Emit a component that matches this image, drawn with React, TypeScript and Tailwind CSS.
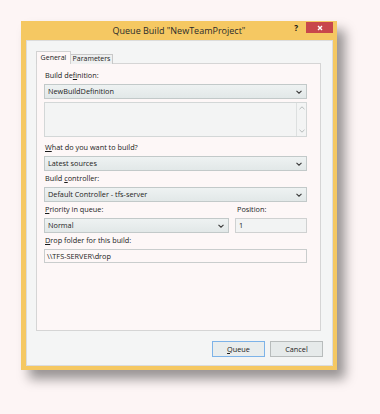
import React from 'react';

const font = { fontFamily: '"Segoe UI", "Open Sans", "Noto Sans", sans-serif' };

const Chevron: React.FC = () => (
  <svg width="6" height="4" viewBox="0 0 6 4" className="shrink-0">
    <path d="M0.5 0.8 L3 3.2 L5.5 0.8" fill="none" stroke="#3a3a3a" strokeWidth="1.1" />
  </svg>
);

const Label: React.FC<{ children: React.ReactNode; className?: string }> = ({ children, className = '' }) => (
  <div className={`h-[14px] leading-[14px] text-[7.3px] font-medium text-[#1a1a1a] pl-[1px] ${className}`}>{children}</div>
);

const Select: React.FC<{ value: string; className?: string }> = ({ value, className = '' }) => (
  <div
    className={`h-[15px] flex items-center justify-between pl-[3px] pr-[4px] border border-[#c2c9c9] bg-gradient-to-b from-[#eef2f2] to-[#e2e8e8] text-[7.3px] font-medium text-[#1a1a1a] ${className}`}
  >
    <span>{value}</span>
    <Chevron />
  </div>
);

const U: React.FC<{ children: React.ReactNode }> = ({ children }) => (
  <span className="underline decoration-[0.7px] underline-offset-[1px]">{children}</span>
);

export default function App() {
  return (
    <div className="w-[380px] h-[414px] bg-[#fdf5f5] pt-[21px] pl-[21px]" style={font}>
      <div className="w-[316px] h-[349px] bg-[#f5c862] flex flex-col shadow-[8px_9px_11px_rgba(0,0,0,0.4)]">
        {/* title bar */}
        <div className="relative h-[19px] flex items-center justify-center shrink-0">
          <span className="text-[9px] text-[#2b2b2b]">Queue Build "NewTeamProject"</span>
          <span className="absolute right-[39px] top-[1px] text-[8px] font-bold text-[#111]">?</span>
          <div className="absolute right-[4px] top-[1px] w-[27px] h-[11px] bg-[#c8474b] flex items-center justify-center">
            <svg width="6" height="6" viewBox="0 0 6 6">
              <path d="M1 1 L5 5 M5 1 L1 5" stroke="#fff" strokeWidth="1.4" />
            </svg>
          </div>
        </div>

        {/* body */}
        <div className="flex-1 ml-[5px] mr-[4px] mb-[4px] bg-[#f4f5f5] border border-[#dcdcdc] pt-[10px] pl-[9px] pr-[11px] flex flex-col">
          {/* tabs */}
          <div className="h-[13px] flex items-end relative z-10 -mb-[1px]">
            <div className="h-[13px] w-[35px] border border-b-0 border-[#d2d2d2] bg-[#fdf7f7] text-[7px] font-medium text-[#1a1a1a] flex items-center justify-center">
              General
            </div>
            <div className="h-[10px] w-[42px] border border-l-0 border-b-0 border-[#c8c8c8] bg-[#eff0f0] text-[7px] font-medium text-[#1a1a1a] flex items-center justify-center">
              Parameters
            </div>
          </div>

          {/* panel */}
          <div className="h-[268px] border border-[#d5d5d5] bg-[#fdf7f7] pt-[4px] pl-[7px] pr-[13px]">
            <Label>
              Build de<U>f</U>inition:
            </Label>
            <Select value="NewBuildDefinition" className="mt-[2px]" />

            <div className="mt-[3px] h-[35px] border border-[#d3d7d7] bg-[#f3f4f4] flex justify-end">
              <div className="w-[10px] border-l border-[#dde0e0] flex flex-col items-center justify-between py-[3px]">
                <svg width="6" height="4" viewBox="0 0 6 4">
                  <path d="M0.5 3.2 L3 0.8 L5.5 3.2" fill="none" stroke="#b5baba" strokeWidth="1" />
                </svg>
                <svg width="6" height="4" viewBox="0 0 6 4">
                  <path d="M0.5 0.8 L3 3.2 L5.5 0.8" fill="none" stroke="#b5baba" strokeWidth="1" />
                </svg>
              </div>
            </div>

            <Label className="mt-[3px]">
              <U>W</U>hat do you want to build?
            </Label>
            <Select value="Latest sources" className="mt-[2px]" />

            <Label>
              Build <U>c</U>ontroller:
            </Label>
            <Select value="Default Controller - tfs-server" className="mt-[2px]" />

            <div className="flex gap-[6px]">
              <div className="flex-1">
                <Label>
                  <U>P</U>riority in queue:
                </Label>
                <Select value="Normal" className="mt-[2px]" />
              </div>
              <div className="w-[72px]">
                <Label className="pl-[2px]">Position:</Label>
                <div className="mt-[2px] h-[15px] border border-[#cfd1d1] bg-[#f2f3f3] pl-[3px] flex items-center text-[7.3px] font-medium text-[#1a1a1a]">
                  1
                </div>
              </div>
            </div>

            <Label>
              <U>D</U>rop folder for this build:
            </Label>
            <div className="mt-[2px] h-[14px] border border-[#c9cdcd] bg-[#fdf7f7] pl-[2px] flex items-center text-[7.3px] font-medium text-[#1a1a1a]">
              \\TFS-SERVER\drop
            </div>
          </div>

          {/* buttons */}
          <div className="mt-[10px] -mr-[2px] flex justify-end gap-[5px]">
            <div className="w-[53px] h-[16px] border border-[#7db3e8] bg-[#e9eded] flex items-center justify-center text-[7.3px] font-medium text-[#1a1a1a]">
              <U>Q</U>ueue
            </div>
            <div className="w-[53px] h-[16px] border border-[#b8bcbc] bg-[#e6eaea] flex items-center justify-center text-[7.3px] font-medium text-[#1a1a1a]">
              Cancel
            </div>
          </div>
        </div>
      </div>
    </div>
  );
}
